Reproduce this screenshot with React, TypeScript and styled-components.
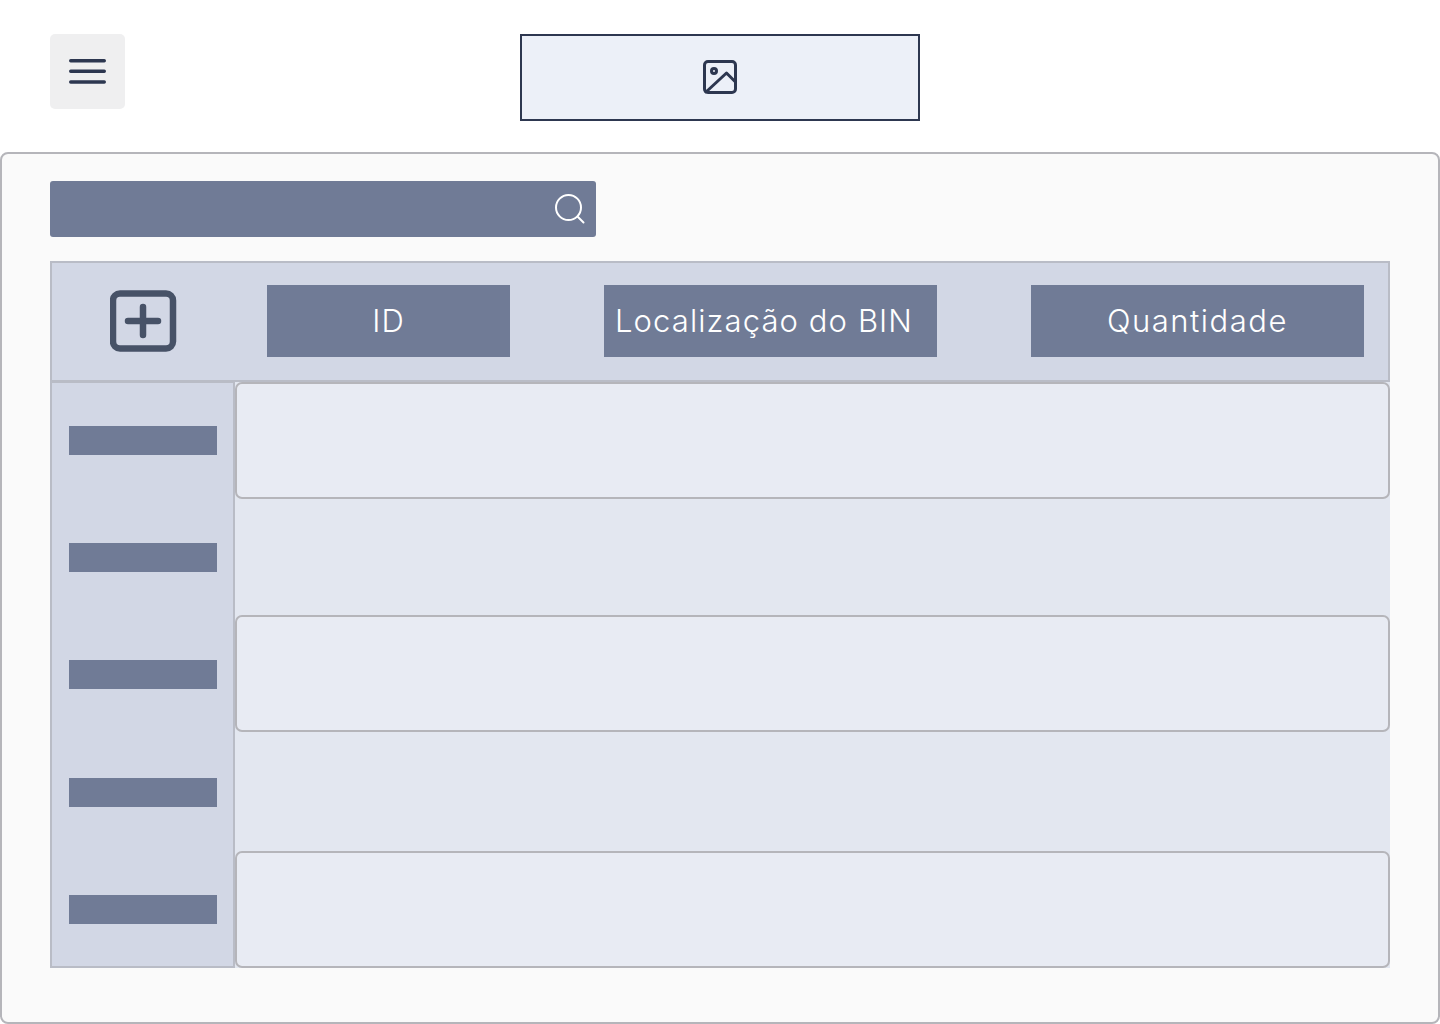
import styled, { createGlobalStyle } from "styled-components";

const GlobalStyle = createGlobalStyle`
  html, body {
    margin: 0;
    padding: 0;
    background: #fff;
    font-family: Inter, "Open Sans", sans-serif;
  }
  * {
    box-sizing: border-box;
  }
`;

const Page = styled.div`
  width: 1440px;
  height: 1024px;
  overflow: hidden;
`;

const TopBar = styled.header`
  display: grid;
  grid-template-columns: 1fr 400px 1fr;
  align-items: start;
  height: 152px;
  padding-top: 34px;
`;

const MenuButton = styled.button`
  display: flex;
  align-items: center;
  justify-content: center;
  width: 75px;
  height: 75px;
  margin-left: 50px;
  padding: 0;
  border: 0;
  border-radius: 5px;
  background: #efeff0;
`;

const LogoBox = styled.div`
  display: flex;
  align-items: center;
  justify-content: center;
  height: 87px;
  padding-bottom: 1px;
  border: 2px solid #2d3750;
  background: #ecf0f8;
`;

const Panel = styled.main`
  height: 872px;
  padding: 27px 48px 0;
  border: 2px solid #b5b5ba;
  border-radius: 8px;
  background: #fafafa;
`;

const SearchBar = styled.div`
  display: flex;
  align-items: center;
  justify-content: flex-end;
  width: 546px;
  height: 56px;
  padding-right: 10px;
  border-radius: 3px;
  background: #707b96;
`;

const Table = styled.section`
  margin-top: 24px;
  width: 1340px;
`;

const HeaderRow = styled.div`
  display: flex;
  align-items: center;
  height: 122px;
  padding-bottom: 1px;
  border: 2px solid #b9bcc6;
  border-bottom-width: 3px;
  background: #d2d7e5;
`;

const AddCell = styled.div`
  display: flex;
  justify-content: center;
  width: 183px;
  margin-right: 32px;
`;

const ColumnLabel = styled.div<{ $width: number; $gap?: number; $tracking?: number; $pull?: number }>`
  display: flex;
  align-items: center;
  justify-content: center;
  width: ${(p) => p.$width}px;
  height: 72px;
  margin-right: ${(p) => p.$gap ?? 0}px;
  padding-bottom: 2px;
  padding-right: ${(p) => p.$pull ?? 0}px;
  background: #707b96;
  color: #fff;
  font-size: 31px;
  font-weight: 300;
  letter-spacing: ${(p) => p.$tracking ?? 1}px;
  white-space: nowrap;
`;

const TableBody = styled.div`
  display: flex;
  height: 586px;
  margin-top: -1px;
`;

const Sidebar = styled.div`
  display: grid;
  grid-auto-rows: 1fr;
  width: 185px;
  box-shadow: inset 2px 0 #b9bcc6, inset -2px 0 #b9bcc6, inset 0 -2px #b9bcc6, inset 0 1px #b9bcc6;
  background: #d2d7e5;
`;

const SidebarCell = styled.div`
  display: flex;
  align-items: center;
  justify-content: center;
`;

const SidebarBar = styled.div`
  width: 148px;
  height: 29px;
  background: #707b96;
`;

const Rows = styled.div`
  display: grid;
  grid-template-rows: 117px 116px 117px 119px 117px;
  flex: 1;
  background: #e3e7f0;
`;

const Row = styled.div<{ $outlined?: boolean }>`
  border: ${(p) => (p.$outlined ? "2px solid #b5b5ba" : "0")};
  border-radius: 7px;
  background: ${(p) => (p.$outlined ? "#e8ebf3" : "transparent")};
`;

const MenuIcon = () => (
  <svg width="37" height="25" viewBox="0 0 37 25" fill="none" stroke="#2d3750" strokeWidth="3.4" strokeLinecap="round">
    <path d="M1.7 1.7h33.6M1.7 12.2h33.6M1.7 23h33.6" />
  </svg>
);

const ImageIcon = () => (
  <svg width="34" height="34" viewBox="0 0 34 34" fill="none" stroke="#2d3750" strokeWidth="3" strokeLinecap="round" strokeLinejoin="round">
    <rect x="1.5" y="1.5" width="31" height="31" rx="3.5" />
    <circle cx="11" cy="11" r="2.5" />
    <path d="M3 32 23.5 13l9 9" />
  </svg>
);

const SearchIcon = () => (
  <svg width="32" height="32" viewBox="0 0 32 32" fill="none" stroke="#fff" strokeWidth="2" strokeLinecap="round">
    <circle cx="14.5" cy="14.5" r="12.5" />
    <path d="m24 24 5.5 5.5" />
  </svg>
);

const AddIcon = () => (
  <svg width="68" height="62" viewBox="0 0 68 62" fill="none" stroke="#475267" strokeWidth="6.5" strokeLinecap="round" strokeLinejoin="round">
    <rect x="3" y="3.5" width="60" height="55" rx="7" />
    <path d="M18 31h30M33 17v28" />
  </svg>
);

const rows = [true, false, true, false, true];

export default function App() {
  return (
    <Page>
      <GlobalStyle />
      <TopBar>
        <MenuButton aria-label="Menu">
          <MenuIcon />
        </MenuButton>
        <LogoBox>
          <ImageIcon />
        </LogoBox>
      </TopBar>
      <Panel>
        <SearchBar>
          <SearchIcon />
        </SearchBar>
        <Table>
          <HeaderRow>
            <AddCell>
              <AddIcon />
            </AddCell>
            <ColumnLabel $width={243} $gap={94}>ID</ColumnLabel>
            <ColumnLabel $width={333} $gap={94} $tracking={1.1} $pull={13}>Localização do BIN</ColumnLabel>
            <ColumnLabel $width={333} $tracking={1.5}>Quantidade</ColumnLabel>
          </HeaderRow>
          <TableBody>
            <Sidebar>
              {rows.map((_, i) => (
                <SidebarCell key={i}>
                  <SidebarBar />
                </SidebarCell>
              ))}
            </Sidebar>
            <Rows>
              {rows.map((outlined, i) => (
                <Row key={i} $outlined={outlined} />
              ))}
            </Rows>
          </TableBody>
        </Table>
      </Panel>
    </Page>
  );
}
